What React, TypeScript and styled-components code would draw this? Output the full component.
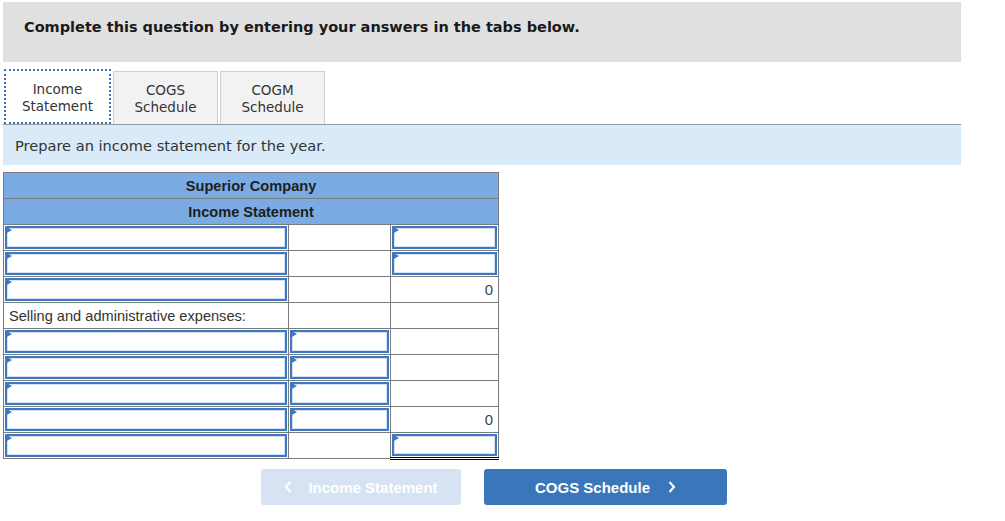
import React from 'react';
import styled, { createGlobalStyle } from 'styled-components';

const GlobalStyles = createGlobalStyle`
  body {
    margin: 0;
    background: #ffffff;
    font-family: "DejaVu Sans", Verdana, sans-serif;
    color: #222;
  }
`;

const Page = styled.div`
  width: 1005px;
  padding: 2px 0 0 3px;
  box-sizing: border-box;
`;

const Banner = styled.div`
  width: 958px;
  height: 60px;
  background: #e0e0e0;
  box-sizing: border-box;
  padding: 17px 0 0 21px;
  font-size: 14.5px;
  font-weight: bold;
  color: #1a1a1a;
`;

const TabBar = styled.div`
  display: flex;
  align-items: flex-end;
  gap: 2px;
  margin-top: 7px;
  padding-left: 1px;
  width: 957px;
  border-bottom: 1px solid #9a9a9a;
`;

const Tab = styled.div<{ $active?: boolean }>`
  width: ${p => (p.$active ? '107px' : '105px')};
  height: ${p => (p.$active ? '55px' : '53px')};
  box-sizing: border-box;
  display: flex;
  align-items: center;
  justify-content: center;
  padding-top: ${p => (p.$active ? '3px' : '1px')};
  text-align: center;
  font-size: 13.5px;
  line-height: 17px;
  color: #333;
  background: ${p => (p.$active ? '#ffffff' : '#f2f2f2')};
  border: ${p => (p.$active ? '2px dotted #3b73b9' : '1px solid #cfcfcf')};
  border-bottom: ${p => (p.$active ? '2px dotted #3b73b9' : 'none')};
`;

const Instruction = styled.div`
  width: 958px;
  height: 40px;
  background: #d9eaf9;
  box-sizing: border-box;
  padding-left: 12px;
  display: flex;
  align-items: center;
  font-size: 14.6px;
  color: #333;
`;

const Sheet = styled.table`
  margin-top: 7px;
  border-collapse: collapse;
  width: 495px;
  table-layout: fixed;
  font-family: "Liberation Sans", Arial, sans-serif;
  font-size: 14.6px;
  color: #333;
`;

const HeadCell = styled.th`
  background: #7aace3;
  border: 1px solid #7b7b7b;
  height: 25px;
  padding: 0;
  font-weight: bold;
  font-size: 14.6px;
  color: #1e1e1e;
`;

const Cell = styled.td<{ $topRule?: boolean; $double?: boolean; $short?: boolean }>`
  border: 1px solid #7b7b7b;
  ${p => p.$topRule && 'border-top: 1px solid #000;'}
  ${p => p.$double && 'border-bottom: 3px double #000;'}
  height: ${p => (p.$short ? '24px' : '25px')};
  padding: 0;
  position: relative;
  text-align: right;
`;

const LabelCell = styled(Cell)`
  text-align: left;
  padding-left: 5px;
`;

const Amount = styled.span`
  padding-right: 5px;
  font-size: 15px;
  color: #444;
`;

const Field = styled.div`
  position: absolute;
  inset: 1px;
  border: 2px solid #3e78c0;
  box-shadow: inset 0 0 0 1px #d3e3f5;
  background: #fff;
  &::before {
    content: '';
    position: absolute;
    left: -2px;
    top: -2px;
    border-top: 4px solid transparent;
    border-bottom: 4px solid transparent;
    border-left: 7px solid #3e78c0;
  }
`;

const Nav = styled.div`
  display: flex;
  gap: 23px;
  margin-top: 9px;
  padding-left: 258px;
`;

const NavButton = styled.button<{ $disabled?: boolean }>`
  height: 36px;
  width: ${p => (p.$disabled ? '200px' : '243px')};
  border: none;
  border-radius: 3px;
  background: ${p => (p.$disabled ? '#d6e3f2' : '#3a76ba')};
  color: #ffffff;
  font-family: "Liberation Sans", Arial, sans-serif;
  font-weight: bold;
  font-size: 15px;
  display: flex;
  align-items: center;
  justify-content: center;
  gap: ${p => (p.$disabled ? '16px' : '18px')};
  padding: 0;
`;

const Chevron = ({ left }: { left?: boolean }) => (
  <svg width="8" height="12" viewBox="0 0 8 12">
    <path
      d={left ? 'M6.5 1 L2 6 L6.5 11' : 'M1.5 1 L6 6 L1.5 11'}
      fill="none"
      stroke="#fff"
      strokeWidth="2"
    />
  </svg>
);

type Row = {
  a: 'input' | string;
  b: 'input' | '';
  c: 'input' | '0' | '';
  cTop?: boolean;
  cDouble?: boolean;
};

const rows: Row[] = [
  { a: 'input', b: '', c: 'input' },
  { a: 'input', b: '', c: 'input' },
  { a: 'input', b: '', c: '0', cTop: true },
  { a: 'Selling and administrative expenses:', b: '', c: '' },
  { a: 'input', b: 'input', c: '' },
  { a: 'input', b: 'input', c: '' },
  { a: 'input', b: 'input', c: '' },
  { a: 'input', b: 'input', c: '0' },
  { a: 'input', b: '', c: 'input', cTop: true, cDouble: true },
];

function App(): any {
  return (
    <Page>
      <GlobalStyles />
      <Banner>Complete this question by entering your answers in the tabs below.</Banner>
      <TabBar>
        <Tab $active>Income<br />Statement</Tab>
        <Tab>COGS<br />Schedule</Tab>
        <Tab>COGM<br />Schedule</Tab>
      </TabBar>
      <Instruction>Prepare an income statement for the year.</Instruction>
      <Sheet>
        <colgroup>
          <col style={{ width: 285 }} />
          <col style={{ width: 102 }} />
          <col style={{ width: 108 }} />
        </colgroup>
        <thead>
          <tr><HeadCell colSpan={3}>Superior Company</HeadCell></tr>
          <tr><HeadCell colSpan={3}>Income Statement</HeadCell></tr>
        </thead>
        <tbody>
          {rows.map((r, i) => (
            <tr key={i}>
              {r.a === 'input' ? (
                <Cell $short={r.cDouble}><Field /></Cell>
              ) : (
                <LabelCell>{r.a}</LabelCell>
              )}
              <Cell $short={r.cDouble}>{r.b === 'input' && <Field />}</Cell>
              <Cell $topRule={r.cTop} $double={r.cDouble} $short={r.cDouble}>
                {r.c === 'input' ? <Field /> : r.c ? <Amount>{r.c}</Amount> : null}
              </Cell>
            </tr>
          ))}
        </tbody>
      </Sheet>
      <Nav>
        <NavButton $disabled><Chevron left />Income Statement</NavButton>
        <NavButton>COGS Schedule<Chevron /></NavButton>
      </Nav>
    </Page>
  );
}

export default App;
